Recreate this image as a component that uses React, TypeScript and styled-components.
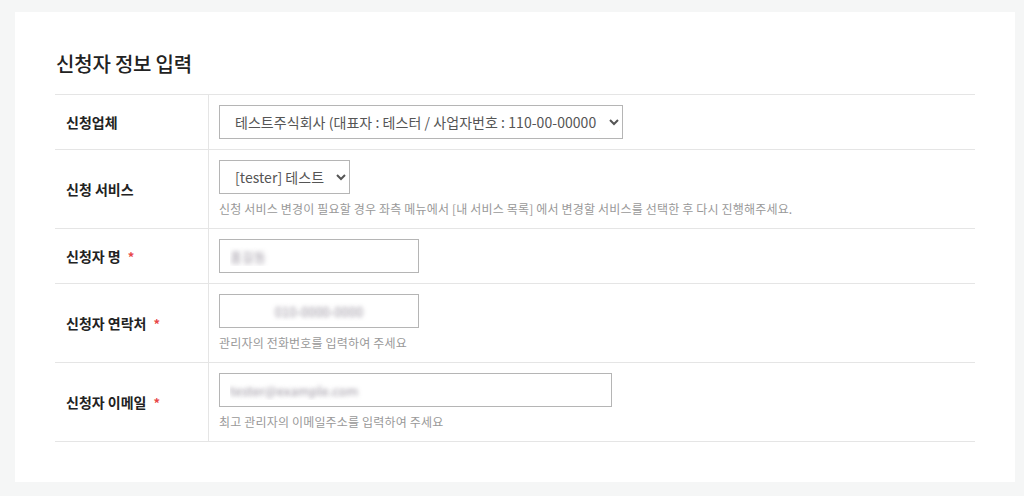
import React from "react";
import styled, { createGlobalStyle } from "styled-components";

const GlobalStyle = createGlobalStyle`
  html, body {
    margin: 0;
    padding: 0;
    background: #f5f6f6;
    font-family: "Noto Sans CJK KR", "Noto Sans", sans-serif;
    color: #222;
  }
`;

const Page = styled.div`
  padding: 12px 9px 14px 15px;
  box-sizing: border-box;
  width: 1024px;
  height: 496px;
`;

const Card = styled.section`
  background: #fff;
  width: 1000px;
  height: 470px;
  box-sizing: border-box;
  padding: 38px 40px 0 40px;
`;

const Title = styled.h2`
  margin: 0 0 0 1px;
  font-size: 20px;
  font-weight: 500;
  line-height: 28px;
  color: #222;
  letter-spacing: -0.2px;
`;

const Table = styled.div`
  margin-top: 16px;
  width: 920px;
  border-top: 1px solid #e5e5e5;
`;

const Row = styled.div`
  display: grid;
  grid-template-columns: 154px 1fr;
  border-bottom: 1px solid #e5e5e5;
`;

const Label = styled.div`
  display: flex;
  align-items: center;
  padding-left: 11px;
  font-size: 14px;
  font-weight: 700;
  color: #222;
  border-right: 1px solid #e5e5e5;
`;

const Star = styled.span`
  color: #e8474a;
  margin-left: 7px;
  font-size: 13px;
`;

const Cell = styled.div`
  padding: 10px 10px 10px 10px;
  display: flex;
  flex-direction: column;
  align-items: flex-start;
`;

const Select = styled.select<{ $w: number }>`
  width: ${(p) => p.$w}px;
  height: 34px;
  box-sizing: border-box;
  border: 1px solid #b5b5b5;
  border-radius: 0;
  background: #fff;
  padding: 0 6px 0 11px;
  font-family: "Noto Sans CJK KR", sans-serif;
  font-size: 14px;
  letter-spacing: 0.05px;
  color: #555;
  outline: none;
`;

const Input = styled.input<{ $w: number; $center?: boolean }>`
  width: ${(p) => p.$w}px;
  height: 34px;
  box-sizing: border-box;
  border: 1px solid #b5b5b5;
  border-radius: 0;
  padding: 0 10px;
  font-family: "Noto Sans CJK KR", sans-serif;
  font-size: 13px;
  text-align: ${(p) => (p.$center ? "center" : "left")};
  color: transparent;
  text-shadow: 0 0 4px rgba(90, 80, 100, 0.6);
  outline: none;
`;

const Help = styled.p`
  margin: 6px 0 0 0;
  font-size: 12px;
  line-height: 18px;
  color: #999;
  letter-spacing: 0.17px;
`;

export default function App() {
  return (
    <>
      <GlobalStyle />
      <Page>
        <Card>
          <Title>신청자 정보 입력</Title>
          <Table>
            <Row>
              <Label>신청업체</Label>
              <Cell>
                <Select $w={404} defaultValue="a">
                  <option value="a">
                    테스트주식회사 (대표자 : 테스터 / 사업자번호 : 110-00-00000 )
                  </option>
                </Select>
              </Cell>
            </Row>
            <Row>
              <Label>신청 서비스</Label>
              <Cell>
                <Select $w={131} defaultValue="t">
                  <option value="t">[tester] 테스트</option>
                </Select>
                <Help>
                  신청 서비스 변경이 필요할 경우 좌측 메뉴에서 [내 서비스 목록] 에서 변경할 서비스를 선택한 후 다시 진행해주세요.
                </Help>
              </Cell>
            </Row>
            <Row>
              <Label>
                신청자 명<Star>*</Star>
              </Label>
              <Cell>
                <Input $w={200} defaultValue="홍길동" readOnly />
              </Cell>
            </Row>
            <Row>
              <Label>
                신청자 연락처<Star>*</Star>
              </Label>
              <Cell>
                <Input $w={200} $center defaultValue="010-0000-0000" readOnly />
                <Help>관리자의 전화번호를 입력하여 주세요</Help>
              </Cell>
            </Row>
            <Row>
              <Label>
                신청자 이메일<Star>*</Star>
              </Label>
              <Cell>
                <Input $w={393} defaultValue="tester@example.com" readOnly />
                <Help>최고 관리자의 이메일주소를 입력하여 주세요</Help>
              </Cell>
            </Row>
          </Table>
        </Card>
      </Page>
    </>
  );
}
